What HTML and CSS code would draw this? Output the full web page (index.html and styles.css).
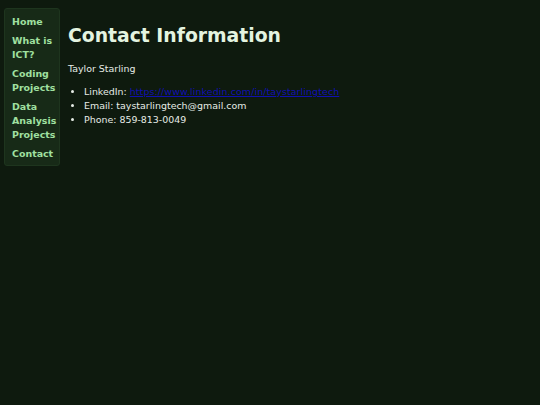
FILE: index.html
```html
<!DOCTYPE html>
<html>
<head>
<meta charset="utf-8">
<link rel="stylesheet" href="styles.css">
</head>
<body>
<div class="layout">
  <nav class="sidebar">
    <a href="#">Home</a>
    <a href="#">What is ICT?</a>
    <a href="#">Coding Projects</a>
    <a href="#">Data Analysis Projects</a>
    <a href="#">Contact</a>
  </nav>
  <main class="content">
    <h1>Contact Information</h1>
    <p>Taylor Starling</p>
    <ul>
      <li>LinkedIn: <a class="link" href="#">https://www.linkedin.com/in/taystarlingtech</a></li>
      <li>Email: taystarlingtech@gmail.com</li>
      <li>Phone: 859-813-0049</li>
    </ul>
  </main>
</div>
</body>
</html>
```
FILE: styles.css
```css
html, body {
  margin: 0;
  padding: 0;
  background: #0e1a0e;
  height: 100%;
}
body {
  font-family: "DejaVu Sans", Verdana, sans-serif;
  font-size: 9.45px;
  line-height: 14px;
  color: #e6ece6;
}
.layout {
  display: flex;
  align-items: flex-start;
  padding: 8px 4px;
  gap: 8px;
}
.sidebar {
  display: flex;
  flex-direction: column;
  gap: 5px;
  box-sizing: border-box;
  width: 56px;
  padding: 6px 3px 4px 7px;
  background: #172a17;
  border: 1px solid #1e351e;
  border-radius: 3px;
}
.sidebar a {
  color: #a0e0a0;
  font-weight: bold;
  text-decoration: none;
}
.content {
  flex: 1;
}
h1 {
  font-size: 18.8px;
  line-height: 22px;
  margin: 17px 0 15px;
  color: #e4f4e0;
}
p {
  margin: 0 0 9px;
}
ul {
  margin: 0;
  padding-left: 16px;
}
.link {
  color: #1010b0;
  letter-spacing: 0.1px;
}
```
